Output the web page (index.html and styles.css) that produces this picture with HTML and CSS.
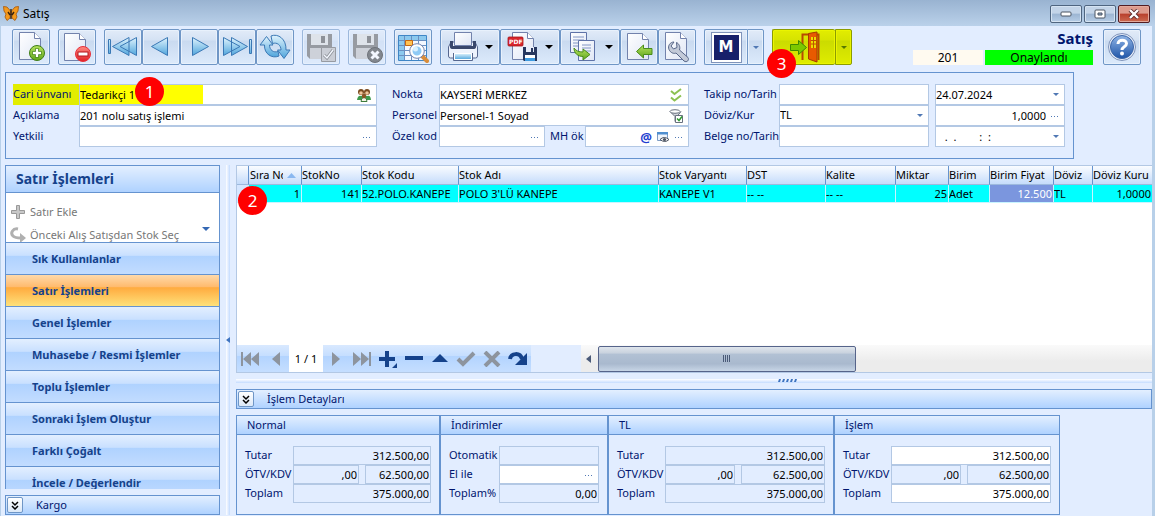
FILE: index.html
```html
<!DOCTYPE html>
<html lang="tr">
  <head>
    <meta charset="UTF-8" />
    <title>Satış</title>
    <link rel="stylesheet" href="styles.css">
  </head>
  <body>
    <svg class="defs" aria-hidden="true">
      <defs>
        <linearGradient id="gBlue" x1="0" y1="0" x2="0" y2="1">
          <stop offset="0" stop-color="#dff3fd" />
          <stop offset="1" stop-color="#4fa5dc" />
        </linearGradient>
        <linearGradient id="gPage" x1="0" y1="0" x2="1" y2="1">
          <stop offset="0" stop-color="#ffffff" />
          <stop offset="1" stop-color="#dfe6f5" />
        </linearGradient>
        <linearGradient id="gGreen" x1="0" y1="0" x2="0" y2="1">
          <stop offset="0" stop-color="#b6e35e" />
          <stop offset="1" stop-color="#5fa51c" />
        </linearGradient>
        <linearGradient id="gRed" x1="0" y1="0" x2="0" y2="1">
          <stop offset="0" stop-color="#ff8a80" />
          <stop offset="1" stop-color="#e01f26" />
        </linearGradient>
        <linearGradient id="gHelp" x1="0" y1="0" x2="0" y2="1">
          <stop offset="0" stop-color="#8fb4e6" />
          <stop offset="1" stop-color="#1f55a8" />
        </linearGradient>
      </defs>
    </svg>

    <header class="titlebar">
      <svg class="logo" width="16" height="16" viewBox="0 0 16 16">
        <path d="M7.500 5 4 1 0.500 0.500 1 5 3 8 2 11 4 14.500 7 12zM8.500 5 12 1 15.500 0.500 15 5 13 8 14 11 12 14.500 9 12z" fill="#f59a1d" stroke="#a5560b" stroke-width=".8" />
        <path d="M8 3v10M5 6l2 3M11 6l-2 3" stroke="#3b2410" stroke-width="1.400" />
      </svg>
      <span class="window-title">Satış</span>
      <div class="window-buttons">
        <button type="button" aria-label="Küçült">
          <svg width="12" height="6" viewBox="0 0 12 6"><rect x="1" y="1" width="10" height="4" rx="1" fill="#fff" stroke="#4b5563" /></svg>
        </button>
        <button type="button" aria-label="Büyüt">
          <svg width="12" height="10" viewBox="0 0 12 10"><rect x="1" y="1" width="10" height="8" rx="1" fill="#fff" stroke="#4b5563" /><path d="M4 4h4v2H4z" fill="#8fa9c8" stroke="#4b5563" /></svg>
        </button>
        <button type="button" class="close" aria-label="Kapat">
          <svg width="12" height="10" viewBox="0 0 12 10"><path d="M2 1l8 8M10 1L2 9" stroke="#5c2a2a" stroke-width="4" /><path d="M2 1l8 8M10 1L2 9" stroke="#fff" stroke-width="2.400" /></svg>
        </button>
      </div>
    </header>

    <div class="window">
      <div class="toolbar">
        <div class="tool-group">
          <button type="button" class="tool" aria-label="Yeni">
            <svg width="32" height="32" viewBox="0 0 32 32">
              <path d="M4.500 1.500h15l6 6v21h-21z" fill="url(#gPage)" stroke="#7282ac" /><path d="M19.500 1.500v6h6" fill="#fff" stroke="#7282ac" />
              <circle cx="22" cy="22" r="7.500" fill="url(#gGreen)" stroke="#3f7d18" /><path d="M22 17.500v9M17.500 22h9" stroke="#3f7d18" stroke-width="4" /><path d="M22 18v8M18 22h8" stroke="#fff" stroke-width="2.400" />
            </svg>
          </button>
        </div>
        <div class="tool-group">
          <button type="button" class="tool" aria-label="Sil">
            <svg width="32" height="32" viewBox="0 0 32 32">
              <path d="M3.500 2.500h15l6 6v21h-21z" fill="url(#gPage)" stroke="#7282ac" /><path d="M18.500 2.500v6h6" fill="#fff" stroke="#7282ac" />
              <circle cx="22" cy="23" r="7.500" fill="url(#gRed)" stroke="#e8303a" /><rect x="17" y="21" width="10" height="4" fill="#fff" stroke="#b5161c" />
            </svg>
          </button>
        </div>
        <div class="tool-group">
          <button type="button" class="tool" aria-label="İlk kayıt">
            <svg width="32" height="32" viewBox="0 0 32 32" fill="url(#gBlue)" stroke="#3a78b5">
              <path d="M1.500 8.500h2v14h-2zM22 6.500v18L5.500 15.500zM29.500 6.500v18L13 15.500z" />
            </svg>
          </button>
          <button type="button" class="tool" aria-label="Önceki kayıt">
            <svg width="32" height="32" viewBox="0 0 32 32" fill="url(#gBlue)" stroke="#3a78b5"><path d="M22.500 6.500v18L6.500 15.500z" /></svg>
          </button>
          <button type="button" class="tool" aria-label="Sonraki kayıt">
            <svg width="32" height="32" viewBox="0 0 32 32" fill="url(#gBlue)" stroke="#3a78b5"><path d="M9.500 6.500v18L25.500 15.500z" /></svg>
          </button>
          <button type="button" class="tool" aria-label="Son kayıt">
            <svg width="32" height="32" viewBox="0 0 32 32" fill="url(#gBlue)" stroke="#3a78b5">
              <path d="M28.500 8.500h2v14h-2zM10.500 6.500v18L26.500 15.500zM2.500 6.500v18L19 15.500z" />
            </svg>
          </button>
          <button type="button" class="tool" aria-label="Yenile">
            <svg width="32" height="32" viewBox="0 0 32 32" fill="url(#gBlue)" stroke="#3a78b5" stroke-linejoin="round">
              <path d="M7.500 5.500 14 14h-3.500c0 5 4 8 8.500 6.500l1 4.500c-7 3-15-2-14.500-11H1z" />
              <path d="M25 27.500 18.500 19H22c0-5-4-8-8.500-6.500L12 5c7-3 15.500 3 15 14h4z" />
            </svg>
          </button>
        </div>
        <div class="tool-group">
          <button type="button" class="tool" aria-label="Onayla" disabled>
            <svg width="32" height="32" viewBox="0 0 32 32">
              <path d="M2 3h25v25H5l-3-3z" fill="#666" /><path d="M6 3h17v11H6z" fill="#ddd" /><path d="M16 5h4v7h-4z" fill="#555" /><path d="M5 17h19v11H5z" fill="#c0c0c0" />
              <path d="M16.500 16.500h14v14h-14z" fill="#bbb" stroke="#666" /><path d="M19 24l3 3 6-8" fill="none" stroke="#555" stroke-width="3" /><path d="M19 24l3 3 6-8" fill="none" stroke="#fff" stroke-width="1.400" />
            </svg>
          </button>
        </div>
        <div class="tool-group">
          <button type="button" class="tool" aria-label="İptal et" disabled>
            <svg width="32" height="32" viewBox="0 0 32 32">
              <path d="M2 3h25v25H5l-3-3z" fill="#666" /><path d="M6 3h17v11H6z" fill="#ddd" /><path d="M16 5h4v7h-4z" fill="#555" /><path d="M5 17h19v11H5z" fill="#c0c0c0" />
              <circle cx="24" cy="24" r="7.500" fill="#444" stroke="#222" /><path d="M20.500 20.500l7 7M27.500 20.500l-7 7" stroke="#fff" stroke-width="3" />
            </svg>
          </button>
        </div>
        <div class="tool-group">
          <button type="button" class="tool" aria-label="Kayıt ara">
            <svg width="32" height="32" viewBox="0 0 32 32">
              <path d="M1.500 4.500h28v25h-28z" fill="#f4f8ff" stroke="#3f86c6" /><path d="M2 5h27v4H2zM2 5h5v24H2z" fill="#8cc9ee" />
              <path d="M2 9.500h27M2 14.500h27M2 19.500h27M2 24.500h27M7.500 5v24M14.500 5v24M21.500 5v24" stroke="#6b8fc0" /><path d="M8.500 9.500h7v5h-7z" fill="#ffc253" stroke="#c76a10" />
              <path d="M24 24l6 6" stroke="#d88c3a" stroke-width="4" stroke-linecap="round" /><circle cx="20" cy="20" r="6" fill="#8fcaf5" stroke="#fff" stroke-width="3" /><circle cx="20" cy="20" r="7.300" fill="none" stroke="#7282ac" /><circle cx="18.500" cy="18" r="2.500" fill="#d9f0ff" />
            </svg>
          </button>
        </div>
        <div class="tool-group">
          <button type="button" class="tool with-menu" aria-label="Yazdır">
            <svg width="32" height="32" viewBox="0 0 32 32">
              <path d="M4 11h24l2.500 5v9q0 2-2 2h-25q-2 0-2-2v-9z" fill="#eef3fc" stroke="#56678f" /><path d="M3 10h3v5h20v-5h3v6q0 2-3 2H6q-3 0-3-2z" fill="#39476b" /><path d="M7.500 1.500h17v13h-17z" fill="url(#gPage)" stroke="#7282ac" />
              <path d="M7.500 22.500h17v6h-17z" fill="url(#gBlue)" stroke="#fff" /><path d="M6.500 22v7.500h19V22" fill="none" stroke="#56678f" />
            </svg>
            <svg class="caret" width="8" height="4" viewBox="0 0 8 4"><path d="M0 0h8L4 4z" /></svg>
          </button>
          <button type="button" class="tool with-menu" aria-label="PDF kaydet">
            <svg width="32" height="32" viewBox="0 0 32 32">
              <path d="M5.500 1.500h15l6 6v21h-21z" fill="url(#gPage)" stroke="#7282ac" /><path d="M20.500 1.500v6h6" fill="#fff" stroke="#7282ac" />
              <rect x="1" y="6" width="15" height="9" rx="1" fill="#d9262c" stroke="#a3151b" stroke-width=".8" /><text x="2" y="13" class="pdf-text">PDF</text>
              <path d="M16 16h14v14H17l-1-1z" fill="#26375f" /><path d="M19 16h8v5h-8z" fill="#e8eefa" /><path d="M24 17h2v4h-2z" fill="#26375f" /><path d="M18 24h10v6H18z" fill="#fff" /><path d="M18 27h10v3H18z" fill="#3f9be0" />
            </svg>
            <svg class="caret" width="8" height="4" viewBox="0 0 8 4"><path d="M0 0h8L4 4z" /></svg>
          </button>
          <button type="button" class="tool with-menu" aria-label="Kopyala">
            <svg width="32" height="32" viewBox="0 0 32 32">
              <path d="M3.500 1.500h16v20h-16z" fill="url(#gPage)" stroke="#5f73a8" /><path d="M6 6h11M6 9h11M6 12h6M6 15h5" stroke="#8296c4" /><path d="M11.500 9.500h16v20h-16z" fill="url(#gPage)" stroke="#5f73a8" /><path d="M15 14h9M15 17h9M17 20h7" stroke="#8296c4" />
              <path d="M7 17c2 3 5 4 9 4v-3l7 5.500-7 5.500v-3.500c-5 0-9-3-9-8.500z" fill="url(#gGreen)" stroke="#4a8c1a" />
            </svg>
            <svg class="caret" width="8" height="4" viewBox="0 0 8 4"><path d="M0 0h8L4 4z" /></svg>
          </button>
          <button type="button" class="tool" aria-label="İçeri aktar">
            <svg width="32" height="32" viewBox="0 0 32 32">
              <path d="M4.500 2.500h15l6 6v20h-21z" fill="url(#gPage)" stroke="#7282ac" /><path d="M19.500 2.500v6h6" fill="#fff" stroke="#7282ac" />
              <path d="M13.500 20.500l7-6.500v3.500h8.500v6h-8.500V27z" fill="url(#gGreen)" stroke="#4a8c1a" />
            </svg>
          </button>
          <button type="button" class="tool" aria-label="Ayarlar">
            <svg width="32" height="32" viewBox="0 0 32 32">
              <path d="M4.500 1.500h15l6 6v21h-21z" fill="url(#gPage)" stroke="#7282ac" /><path d="M19.500 1.500v6h6" fill="#fff" stroke="#7282ac" />
              <path d="M13 11c-4 0-6.500 4-5 7.500s5 4.500 7 3.500l8 8c3 2 5.500-1 4-3.500l-8.500-7.500c1-3-.5-6.500-3-7.500l.5 5-3.500 1.500-2.500-3z" fill="#c3cad8" stroke="#566587" />
            </svg>
          </button>
        </div>
        <div class="tool-group">
          <button type="button" class="tool with-split" aria-label="M">
            <span class="m-frame"><span class="m-logo">M</span></span>
          </button>
          <button type="button" class="tool split" aria-label="M menüsü">
            <svg width="6" height="3" viewBox="0 0 6 3"><path d="M0 0h6L3 3z" fill="#5078b4" /></svg>
          </button>
        </div>
        <div class="tool-group exit">
          <button type="button" class="tool exit-main" aria-label="Çıkış">
            <svg width="32" height="32" viewBox="0 0 32 32">
              <path d="M14.500 29V3.500h16V29" fill="none" stroke="#b84a00" stroke-width="2" /><path d="M20.500 2.500 29 1v30l-8.500-3z" fill="#e85a00" stroke="#a83c00" />
              <path d="M23 6h5v11h-5z" fill="#eddd00" /><path d="M23 9.500h5M23 13h5M25.500 6v11" stroke="#c05000" />
              <path d="M2.500 13.500h8v-4l8 7-8 7v-4h-8z" fill="#7cc800" stroke="#3f8a00" />
            </svg>
          </button>
          <button type="button" class="tool split" aria-label="Çıkış menüsü">
            <svg width="6" height="3" viewBox="0 0 6 3"><path d="M0 0h6L3 3z" fill="#567800" /></svg>
          </button>
          <span class="step step-exit">3</span>
        </div>

        <div class="status">
          <h1>Satış</h1>
          <div class="status-row">
            <span class="record-no">201</span>
            <span class="record-state">Onaylandı</span>
          </div>
        </div>
        <button type="button" class="tool help" aria-label="Yardım">
          <svg width="32" height="32" viewBox="0 0 32 32">
            <circle cx="16" cy="16" r="13.500" fill="#e6edf8" stroke="#7f93ba" /><circle cx="16" cy="16" r="11.500" fill="url(#gHelp)" stroke="#3c66a8" />
            <path d="M12 13c0-5 8.500-5 8.500-.5 0 3.500-4.500 3-4.500 6.500" fill="none" stroke="#fff" stroke-width="3" /><circle cx="16" cy="22.500" r="2" fill="#fff" />
          </svg>
        </button>
      </div>

      <form class="record-form">
        <div class="form-column party">
          <label for="cari" class="marked">Cari ünvanı</label>
          <div class="field marked-field">
            <input type="text" id="cari" value="Tedarikçi 1" />
            <svg width="14" height="14" viewBox="0 0 14 14">
              <path d="M0 12q1-5 4-4 3-1 3.500 4zM6.500 12q1-5 4-4 3-1 3.500 4z" fill="#3d9a4c" /><circle cx="4" cy="4" r="3" fill="#7a4a1e" /><circle cx="10" cy="4" r="3" fill="#7a4a1e" /><circle cx="4" cy="5" r="1.800" fill="#f2c79b" /><circle cx="10" cy="5" r="1.800" fill="#f2c79b" /><path d="M4 13.500q0-4 3-4t3 4z" fill="#f4f4e4" stroke="#3d7a3c" /><circle cx="7" cy="8" r="2.200" fill="#8a5424" />
            </svg>
            <span class="step step-party">1</span>
          </div>
          <label for="aciklama">Açıklama</label>
          <div class="field"><input type="text" id="aciklama" value="201 nolu satış işlemi" /></div>
          <label for="yetkili">Yetkili</label>
          <div class="field"><input type="text" id="yetkili" /><button type="button" class="more" aria-label="Yetkili seç"></button></div>
        </div>

        <div class="form-column place">
          <label for="nokta">Nokta</label>
          <div class="field wide">
            <input type="text" id="nokta" value="KAYSERİ MERKEZ" />
            <svg width="14" height="14" viewBox="0 0 14 14" fill="none" stroke="#8cc152" stroke-width="2"><path d="M2 3l3.500 3L12 1M2 9.500l3.500 3 6.500-5" /></svg>
          </div>
          <label for="personel">Personel</label>
          <div class="field wide">
            <input type="text" id="personel" value="Personel-1 Soyad" />
            <svg width="14" height="14" viewBox="0 0 14 14"><path d="M1 2.500l5 5v5l2-1v-4l4-5" fill="#d3d7de" stroke="#68707e" /><ellipse cx="6" cy="2.500" rx="5" ry="1.800" fill="#fff" stroke="#68707e" /><path d="M6.500 6.500h7v7h-7z" fill="#fff" stroke="#68707e" /><path d="M8 9.500l2 2 3-4" fill="none" stroke="#2f9a2f" stroke-width="1.500" /></svg>
          </div>
          <label for="ozelkod">Özel kod</label>
          <div class="field"><input type="text" id="ozelkod" /><button type="button" class="more" aria-label="Özel kod seç"></button></div>
          <label for="mhok" class="mh-label">MH ök</label>
          <div class="field">
            <input type="text" id="mhok" />
            <button type="button" class="at" aria-label="E-posta">@</button>
            <svg width="14" height="14" viewBox="0 0 14 14"><path d="M1.500 2.500h10v8h-10z" fill="#eef4fc" stroke="#7d9cc4" /><path d="M1 2h11v2.500H1z" fill="#4f8fd0" /><path d="M4 9.500q4-4 9 0-4 4-9 0z" fill="#fff" stroke="#4a5260" /><circle cx="8.500" cy="9.500" r="1.600" fill="#4a5260" /></svg>
            <button type="button" class="more" aria-label="MH özel kod seç"></button>
          </div>
        </div>

        <div class="form-column document">
          <label for="takip">Takip no/Tarih</label>
          <div class="field"><input type="text" id="takip" /></div>
          <div class="field"><input type="text" aria-label="Takip tarihi" value="24.07.2024" /><button type="button" class="drop" aria-label="Tarih seç"></button></div>
          <label for="doviz">Döviz/Kur</label>
          <div class="field"><select id="doviz"><option>TL</option></select><span class="drop"></span></div>
          <div class="field"><input type="text" class="number" aria-label="Kur" value="1,0000" /><button type="button" class="more" aria-label="Kur seç"></button></div>
          <label for="belge">Belge no/Tarih</label>
          <div class="field"><input type="text" id="belge" /></div>
          <div class="field"><input type="text" class="mask" aria-label="Belge tarihi" value=" .  .        :  :" /><button type="button" class="drop" aria-label="Belge tarihi seç"></button></div>
        </div>
      </form>

      <main class="content">
        <aside class="sidebar">
          <nav class="nav-pane">
            <h2>Satır İşlemleri</h2>
            <div class="nav-actions">
              <button type="button">
                <svg width="16" height="16" viewBox="0 0 16 16"><path d="M6.500 1.500h3v5h5v3h-5v5h-3v-5h-5v-3h5z" fill="#c8c8c8" stroke="#999" /></svg>
                Satır Ekle
              </button>
              <button type="button">
                <svg width="16" height="16" viewBox="0 0 16 16"><path d="M8 2C3 1 0 6 3 9c2 2 5 2 8 2" fill="none" stroke="#b0b0b0" stroke-width="3" /><path d="M10 6l6 5-6 5z" fill="#b0b0b0" /></svg>
                Önceki Alış Satışdan Stok Seç
              </button>
              <svg class="nav-more" width="8" height="4" viewBox="0 0 8 4"><path d="M0 0h8L4 4z" fill="#3468b4" /></svg>
            </div>
            <ul class="nav-list">
              <li><a href="#">Sık Kullanılanlar</a></li>
              <li><a href="#" class="active">Satır İşlemleri</a></li>
              <li><a href="#">Genel İşlemler</a></li>
              <li><a href="#">Muhasebe / Resmi İşlemler</a></li>
              <li><a href="#">Toplu İşlemler</a></li>
              <li><a href="#">Sonraki İşlem Oluştur</a></li>
              <li><a href="#">Farklı Çoğalt</a></li>
              <li><a href="#">İncele / Değerlendir</a></li>
            </ul>
          </nav>
          <div class="fold-bar">
            <button type="button" aria-label="Kargo aç">
              <svg width="8" height="9" viewBox="0 0 8 9" fill="none" stroke="#000" stroke-width="1.500"><path d="M1 1l3 3 3-3M1 5l3 3 3-3" /></svg>
            </button>
            <span>Kargo</span>
          </div>
        </aside>

        <div class="splitter-v">
          <svg width="4" height="6" viewBox="0 0 4 6"><path d="M4 0v6L0 3z" fill="#3f74c0" /></svg>
        </div>

        <section class="work">
          <div class="grid-box">
            <table class="lines">
              <colgroup>
                <col class="c-mark" /><col class="c-sira" /><col class="c-no" /><col class="c-kod" /><col class="c-ad" /><col class="c-var" /><col class="c-dst" /><col class="c-kalite" /><col class="c-miktar" /><col class="c-birim" /><col class="c-fiyat" /><col class="c-doviz" /><col />
              </colgroup>
              <thead>
                <tr>
                  <th></th>
                  <th><div class="sorted"><span>Sıra No</span><svg width="9" height="5" viewBox="0 0 9 5"><path d="M0 5h9L4.500 0z" fill="#8ab8f0" /></svg></div></th>
                  <th>StokNo</th>
                  <th>Stok Kodu</th>
                  <th>Stok Adı</th>
                  <th>Stok Varyantı</th>
                  <th>DST</th>
                  <th>Kalite</th>
                  <th>Miktar</th>
                  <th>Birim</th>
                  <th>Birim Fiyat</th>
                  <th>Döviz</th>
                  <th>Döviz Kuru</th>
                </tr>
              </thead>
              <tbody>
                <tr>
                  <td class="mark"><span class="step step-line">2</span></td>
                  <td class="number">1</td>
                  <td class="number">141</td>
                  <td>52.POLO.KANEPE</td>
                  <td>POLO 3'LÜ KANEPE</td>
                  <td>KANEPE V1</td>
                  <td>-- --</td>
                  <td>-- --</td>
                  <td class="number">25</td>
                  <td>Adet</td>
                  <td class="number focused">12.500</td>
                  <td>TL</td>
                  <td class="number">1,0000</td>
                </tr>
              </tbody>
            </table>
            <div class="grid-footer">
              <div class="navigator">
                <button type="button" aria-label="İlk"><svg width="20" height="16" viewBox="0 0 20 16" fill="#8d949e"><path d="M1 1h2v14H1zM11 1v14L3 8zM19 1v14l-8-7z" /></svg></button>
                <button type="button" aria-label="Önceki"><svg width="20" height="16" viewBox="0 0 20 16" fill="#8d949e"><path d="M14 1v14L6 8z" /></svg></button>
                <span class="page">1 / 1</span>
                <button type="button" aria-label="Sonraki"><svg width="20" height="16" viewBox="0 0 20 16" fill="#8d949e"><path d="M6 1v14l8-7z" /></svg></button>
                <button type="button" aria-label="Son"><svg width="20" height="16" viewBox="0 0 20 16" fill="#8d949e"><path d="M17 1h2v14h-2zM9 1v14l8-7zM1 1v14l8-7z" /></svg></button>
                <button type="button" aria-label="Ekle"><svg width="20" height="18" viewBox="0 0 20 18" fill="#15428b"><path d="M7 1h4v6h6v4h-6v6H7v-6H1V7h6zM19 13v5h-5z" /></svg></button>
                <button type="button" aria-label="Çıkar"><svg width="20" height="16" viewBox="0 0 20 16" fill="#15428b"><path d="M1 5h18v4H1z" /></svg></button>
                <button type="button" aria-label="Düzenle"><svg width="20" height="16" viewBox="0 0 20 16" fill="#15428b"><path d="M2 11h16l-8-8z" /></svg></button>
                <button type="button" aria-label="Kaydet"><svg width="20" height="16" viewBox="0 0 20 16" fill="none" stroke="#8d949e" stroke-width="4"><path d="M2 8l5 5L18 2" /></svg></button>
                <button type="button" aria-label="Vazgeç"><svg width="20" height="16" viewBox="0 0 20 16" fill="none" stroke="#8d949e" stroke-width="4"><path d="M3 1l14 14M17 1L3 15" /></svg></button>
                <button type="button" aria-label="Tazele"><svg width="20" height="16" viewBox="0 0 20 16"><path d="M2 8c1-6 10-7 12 0" fill="none" stroke="#15428b" stroke-width="4" /><path d="M7 14h12V2z" fill="#15428b" /></svg></button>
              </div>
              <div class="scroll">
                <svg class="scroll-arrow" width="5" height="8" viewBox="0 0 5 8"><path d="M5 0v8L0 4z" fill="#4a5a78" /></svg>
                <div class="thumb"><svg width="8" height="7" viewBox="0 0 8 7"><path d="M.5 0v7M2.500 0v7M4.500 0v7M6.500 0v7" stroke="#4a5a78" /></svg></div>
              </div>
            </div>
          </div>

          <div class="splitter-h">
            <svg width="20" height="3" viewBox="0 0 20 3" fill="#3f74c0"><path d="M1 0h2L2 3H0zM5 0h2L6 3H4zM9 0h2l-1 3H8zM13 0h2l-1 3h-2zM17 0h2l-1 3h-2z" /></svg>
          </div>

          <div class="fold-bar">
            <button type="button" aria-label="İşlem Detayları aç">
              <svg width="8" height="9" viewBox="0 0 8 9" fill="none" stroke="#000" stroke-width="1.500"><path d="M1 1l3 3 3-3M1 5l3 3 3-3" /></svg>
            </button>
            <span>İşlem Detayları</span>
          </div>

          <div class="totals">
            <section class="total-box t-normal">
              <h3>Normal</h3>
              <div class="total-rows">
                <label for="n1">Tutar</label><input id="n1" class="span" value="312.500,00" readonly />
                <label for="n2">ÖTV/KDV</label><input id="n2" value=",00" readonly /><input aria-label="KDV" value="62.500,00" readonly />
                <label for="n3">Toplam</label><input id="n3" class="span" value="375.000,00" readonly />
              </div>
            </section>
            <section class="total-box t-discount">
              <h3>İndirimler</h3>
              <div class="total-rows">
                <label for="i1">Otomatik</label><input id="i1" readonly />
                <label for="i2">El ile</label><div class="field short"><input type="text" id="i2" /><button type="button" class="more" aria-label="İndirim gir"></button></div>
                <label for="i3">Toplam%</label><input id="i3" value="0,00" readonly />
              </div>
            </section>
            <section class="total-box">
              <h3>TL</h3>
              <div class="total-rows">
                <label for="t1">Tutar</label><input id="t1" class="span" value="312.500,00" readonly />
                <label for="t2">ÖTV/KDV</label><input id="t2" value=",00" readonly /><input aria-label="KDV TL" value="62.500,00" readonly />
                <label for="t3">Toplam</label><input id="t3" class="span" value="375.000,00" readonly />
              </div>
            </section>
            <section class="total-box">
              <h3>İşlem</h3>
              <div class="total-rows">
                <label for="s1">Tutar</label><input id="s1" class="span editable" value="312.500,00" />
                <label for="s2">ÖTV/KDV</label><input id="s2" value=",00" readonly /><input aria-label="KDV İşlem" value="62.500,00" readonly />
                <label for="s3">Toplam</label><input id="s3" class="span editable" value="375.000,00" />
              </div>
            </section>
          </div>
        </section>
      </main>
    </div>
  </body>
</html>
```
FILE: styles.css
```css
* {
  box-sizing: border-box;
}
body {
  margin: 0;
  height: 100vh;
  display: flex;
  flex-direction: column;
  overflow: hidden;
  font: 11px/14px "Noto Sans", "DejaVu Sans", sans-serif;
  color: #000;
  background: #b8d0e9;
}
button,
input,
select {
  font: inherit;
  color: inherit;
  margin: 0;
}
svg {
  display: block;
  flex: none;
}
.defs {
  position: absolute;
  width: 0;
  height: 0;
}

/* title bar */
.titlebar {
  flex: none;
  height: 26px;
  display: flex;
  align-items: center;
  gap: 4px;
  padding: 2px 5px 0 3px;
  background: linear-gradient(#99b3d1, #bad1ea);
}
.window-title {
  flex: 1;
  font-size: 12px;
}
.window-buttons {
  display: flex;
  gap: 2px;
}
.window-buttons button {
  width: 32px;
  height: 18px;
  padding: 0;
  display: flex;
  align-items: center;
  justify-content: center;
  border: 1px solid #4f6580;
  border-radius: 2px;
  background: linear-gradient(#c3d4e8 45%, #9cb5d2 50%, #b6cde6);
  box-shadow: inset 0 0 0 1px #d5e3f2;
}
.window-buttons .close {
  border-color: #521c22;
  background: linear-gradient(#dd9a8c 45%, #b8402c 50%, #cc6a50);
  box-shadow: inset 0 0 0 1px #e3a99c;
}

.window {
  flex: 1;
  min-height: 0;
  display: flex;
  flex-direction: column;
  margin: 0 3px 0 1px;
  background: #e2edff;
}

/* toolbar */
.toolbar {
  flex: none;
  display: flex;
  gap: 8px;
  padding: 3px 11px 7px;
}
.tool-group {
  display: flex;
  position: relative;
}
.tool {
  width: 38px;
  height: 36px;
  padding: 0;
  display: flex;
  align-items: center;
  justify-content: center;
  border: 1px solid #6f96c6;
  border-radius: 2px;
  background: linear-gradient(#e2ebf8, #d4e2f4 30%, #c9daf0 32%, #dceafb);
  box-shadow: inset 0 0 0 1px #e8f1fc;
}
.tool:disabled {
  opacity: 0.6;
}
.with-menu {
  width: 60px;
  gap: 6px;
}
.pdf-text {
  font: bold 6px "DejaVu Sans", sans-serif;
  fill: #fff;
}
.with-split {
  width: 43px;
  border-right: none;
  border-radius: 2px 0 0 2px;
}
.split {
  width: 17px;
  border-radius: 0 2px 2px 0;
}
.m-frame {
  padding: 2px;
  border: 1px solid #7f93ba;
  background: #fff;
}
.m-logo {
  display: block;
  width: 25px;
  height: 25px;
  background: #17206a;
  color: #fff;
  font: bold 15px/25px "DejaVu Sans", sans-serif;
}
.exit .tool {
  border-color: #8c9c00;
  background: linear-gradient(#e3ed00, #d6e300 30%, #cbdb00 32%, #dfec00);
  box-shadow: inset 0 0 0 1px #eaf400;
}
.exit .exit-main {
  width: 63px;
  border-right: none;
}
.status {
  margin-left: auto;
  text-align: right;
}
.status h1 {
  margin: 0;
  padding-bottom: 2px;
  font-size: 15px;
  line-height: 19px;
  color: #00156e;
}
.status-row {
  display: flex;
  gap: 2px;
  font-size: 12px;
  line-height: 15px;
  text-align: center;
}
.record-no {
  width: 70px;
  background: #fffaf0;
}
.record-state {
  width: 108px;
  background: #0f0;
}
.help {
  margin-left: 2px;
}

/* numbered markers */
.step {
  position: absolute;
  z-index: 2;
  width: 29px;
  height: 29px;
  border-radius: 50%;
  background: #f00;
  color: #fff;
  font: 17px/29px "Noto Sans", sans-serif;
  text-align: center;
}
.step-exit {
  left: -5px;
  top: 20px;
}
.step-party {
  left: 55px;
  top: -8px;
}
.step-line {
  left: 1px;
  top: 1px;
}

/* record form */
.record-form {
  flex: none;
  width: fit-content;
  margin: 0 4px;
  padding: 11px 8px 11px 7px;
  display: flex;
  gap: 15px;
  border: 1px solid #6593cf;
  color: #00156e;
}
.form-column {
  display: grid;
  grid-auto-rows: 21px;
}
.form-column label {
  line-height: 20px;
  white-space: nowrap;
}
.party {
  grid-template-columns: 66px 298px;
}
.place {
  grid-template-columns: 47px 106px 40px 104px;
}
.place .wide {
  grid-column: span 3;
}
.document {
  grid-template-columns: 75px 150px 136px;
}
.document .field + .field {
  margin-left: 6px;
}
.mh-label {
  padding-left: 5px;
}
.field {
  position: relative;
  display: flex;
  align-items: center;
  gap: 4px;
  padding-right: 5px;
  border: 1px solid #b3c8e4;
  background: #fff;
  color: #000;
}
.field input,
.field select {
  flex: 1;
  min-width: 0;
  width: 100%;
  height: 18px;
  padding: 0 0 1px;
  border: none;
  outline: none;
  background: transparent;
  appearance: none;
}
.field .number {
  text-align: right;
}
.field .mask {
  padding-left: 6px;
  white-space: pre;
}
.form-column .marked {
  background: #e2ed00;
}
.marked-field {
  background: linear-gradient(90deg, #ff0 123px, #fff 123px);
}
.more,
.drop {
  flex: none;
  width: 9px;
  height: 12px;
  padding: 0;
  border: none;
  background: radial-gradient(circle, #5078b4 1px, transparent 1px) 0 5px / 3px 3px repeat-x;
}
.drop {
  height: 3px;
  width: 6px;
  background: #5078b4;
  clip-path: polygon(0 0, 100% 0, 50% 100%);
}
.at {
  padding: 0;
  border: none;
  background: none;
  color: #1f3fd0;
  font-size: 13px;
  font-weight: bold;
}

/* main area */
.content {
  flex: 1;
  min-height: 0;
  display: flex;
  padding: 6px 0 1px 4px;
}
.sidebar {
  flex: none;
  width: 215px;
  display: flex;
  flex-direction: column;
  gap: 6px;
}
.nav-pane {
  flex: 1;
  min-height: 0;
  overflow: hidden;
  border: 1px solid #6593cf;
  border-bottom: none;
}
.nav-pane h2 {
  margin: 0;
  padding-left: 10px;
  font-size: 14px;
  line-height: 26px;
  color: #15428b;
  background: linear-gradient(#e3efff, #afd2ff);
  border-bottom: 1px solid #6593cf;
}
.nav-actions {
  position: relative;
  height: 49px;
  padding: 7px 4px 0;
  overflow: hidden;
  background: #fff;
}
.nav-actions button {
  display: flex;
  align-items: center;
  gap: 4px;
  height: 23px;
  padding: 0;
  border: none;
  background: none;
  color: #777;
  white-space: nowrap;
}
.nav-more {
  position: absolute;
  right: 9px;
  bottom: 11px;
}
.nav-list {
  margin: 0;
  padding: 0;
  list-style: none;
}
.nav-list a {
  display: block;
  height: 32px;
  padding-left: 26px;
  border-top: 1px solid #6593cf;
  font-weight: bold;
  line-height: 31px;
  color: #15428b;
  text-decoration: none;
  background: linear-gradient(#e3efff, #c9e0ff 40%, #afd2ff 42%, #c2dcff);
}
.nav-list .active {
  background: linear-gradient(#ffd9aa, #ffbb6e 38%, #ffab3f 41%, #fee17a);
}
.fold-bar {
  flex: none;
  height: 20px;
  display: flex;
  align-items: center;
  gap: 13px;
  padding-left: 1px;
  border: 1px solid #6593cf;
  background: linear-gradient(#e3efff, #afd2ff);
  color: #00156e;
}
.fold-bar button {
  width: 16px;
  height: 16px;
  padding: 0;
  display: flex;
  align-items: center;
  justify-content: center;
  border: 1px solid #6f96c6;
  border-radius: 2px;
  background: linear-gradient(#fff, #dbe8f8);
}
.splitter-v {
  flex: none;
  width: 4px;
  margin: 0 6px;
  display: flex;
  align-items: center;
  background: linear-gradient(90deg, #fff, #e2edff 50%, #c4dcff);
}
.work {
  flex: 1;
  min-width: 0;
  display: flex;
  flex-direction: column;
}
.grid-box {
  flex: 1;
  min-height: 0;
  display: flex;
  flex-direction: column;
  justify-content: space-between;
  border: 1px solid #b3c8e4;
  border-right: none;
  background: #fff;
}
.lines {
  width: 100%;
  table-layout: fixed;
  border-collapse: separate;
  border-spacing: 0;
}
.c-mark { width: 12px; }
.c-sira { width: 53px; }
.c-no { width: 60px; }
.c-kod { width: 97px; }
.c-ad { width: 200px; }
.c-var { width: 88px; }
.c-dst { width: 79px; }
.c-kalite { width: 70px; }
.c-miktar { width: 53px; }
.c-birim { width: 41px; }
.c-fiyat { width: 64px; }
.c-doviz { width: 39px; }
.lines th,
.lines td {
  padding: 0 1px 0 0;
  overflow: hidden;
  text-align: left;
  font-weight: normal;
  white-space: nowrap;
}
.lines th {
  height: 19px;
  border-right: 1px solid #6593cf;
  border-bottom: 1px solid #9db9dd;
  background: linear-gradient(#fafcff, #c5dcfb);
}
.lines td {
  height: 18px;
  border-right: 1px solid #c8f4ff;
  border-bottom: 1px solid #c8f4ff;
  background: #0ff;
}
.lines th:last-child,
.lines td:last-child {
  border-right: none;
}
.lines .number {
  text-align: right;
}
.lines .focused {
  background: #7b96de;
  color: #fff;
}
.lines .mark {
  position: relative;
  overflow: visible;
  background: #d5e6ff;
}
.sorted {
  display: flex;
  align-items: center;
  gap: 4px;
  padding-left: 1px;
}
.sorted span {
  width: 33px;
  overflow: hidden;
}
.grid-footer {
  flex: none;
  display: flex;
  justify-content: space-between;
  height: 27px;
  background: #e2edff;
}
.navigator {
  display: flex;
  background: linear-gradient(#d9e9ff, #c5deff 40%, #b3d4ff 42%, #c5deff);
}
.navigator button {
  width: 26px;
  padding: 0 1px 0 0;
  display: flex;
  align-items: center;
  justify-content: center;
  border: none;
  background: none;
}
.page {
  width: 34px;
  line-height: 27px;
  text-align: center;
  background: #fff;
}
.scroll {
  flex: none;
  width: 62.4%;
  display: flex;
  align-items: center;
  gap: 7px;
  padding-left: 5px;
  background: linear-gradient(#fafafa, #ececec 60%);
}
.thumb {
  width: 258px;
  height: 26px;
  display: flex;
  align-items: center;
  justify-content: center;
  border: 1px solid #56648a;
  border-radius: 2px;
  background: linear-gradient(#dfe5ec, #c9d2de 25%, #b2c1d4 30%, #a9b9ce 70%, #c7d5e6);
}
.splitter-h {
  flex: none;
  height: 4px;
  margin: 6px 0;
  display: flex;
  justify-content: center;
  padding-left: 187px;
  background: linear-gradient(#fff, #e2edff 50%, #c4dcff);
}

/* totals */
.totals {
  flex: none;
  display: flex;
  margin-top: 6px;
  color: #00156e;
}
.total-box {
  width: 226px;
  border: 1px solid #6593cf;
}
.t-normal {
  width: 204px;
}
.t-discount {
  width: 168px;
}
.total-box h3 {
  margin: 0;
  padding-left: 10px;
  font-size: 11px;
  font-weight: normal;
  line-height: 18px;
  background: linear-gradient(#e3efff, #afd2ff);
  border-bottom: 1px solid #6593cf;
}
.total-rows {
  display: grid;
  grid-template-columns: 48px 70px 90px;
  grid-auto-rows: 19px;
  padding: 11px 0 11px 8px;
}
.t-normal .total-rows {
  grid-template-columns: 48px 66px 72px;
}
.t-discount .total-rows {
  grid-template-columns: 50px 100px;
}
.total-rows label {
  line-height: 18px;
}
.total-rows input {
  min-width: 0;
  width: 100%;
  padding: 0 1px;
  border: 1px solid #b3c8e4;
  background: #e2edff;
  color: #000;
  text-align: right;
}
.total-rows input + input {
  width: auto;
  margin-left: 6px;
}
.total-rows .span {
  grid-column: span 2;
}
.total-rows .editable {
  background: #fff;
}
.total-rows .short input {
  border: none;
  background: none;
}
```
